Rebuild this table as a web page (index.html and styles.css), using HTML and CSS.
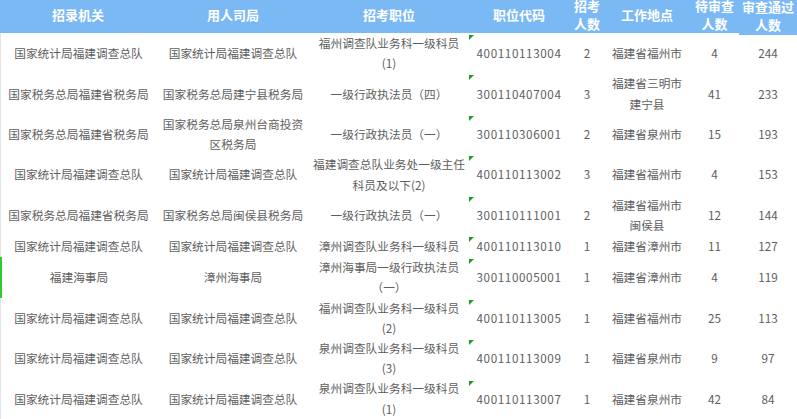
FILE: index.html
```html
<!DOCTYPE html>
<html lang="zh-CN">
<head>
<meta charset="utf-8">
<title>招录机关</title>
<link rel="stylesheet" href="styles.css">
</head>
<body>
<div class="sheet">
  <div class="th">招录机关</div>
  <div class="th">用人司局</div>
  <div class="th">招考职位</div>
  <div class="th">职位代码</div>
  <div class="th two">招考<br>人数</div>
  <div class="th">工作地点</div>
  <div class="th two">待审查<br>人数</div>
  <div class="th two last">审查通过<br>人数</div>

  <div class="td first">国家统计局福建调查总队</div><div class="td">国家统计局福建调查总队</div><div class="td">福州调查队业务科一级科员(1)</div><div class="td code">400110113004</div><div class="td">2</div><div class="td">福建省福州市</div><div class="td">4</div><div class="td">244</div>

  <div class="td first">国家税务总局福建省税务局</div><div class="td">国家税务总局建宁县税务局</div><div class="td">一级行政执法员（四）</div><div class="td code">300110407004</div><div class="td">3</div><div class="td">福建省三明市建宁县</div><div class="td">41</div><div class="td">233</div>

  <div class="td first">国家税务总局福建省税务局</div><div class="td">国家税务总局泉州台商投资区税务局</div><div class="td">一级行政执法员（一）</div><div class="td code">300110306001</div><div class="td">2</div><div class="td">福建省泉州市</div><div class="td">15</div><div class="td">193</div>

  <div class="td first">国家统计局福建调查总队</div><div class="td">国家统计局福建调查总队</div><div class="td">福建调查总队业务处一级主任科员及以下(2)</div><div class="td code">400110113002</div><div class="td">3</div><div class="td">福建省福州市</div><div class="td">4</div><div class="td">153</div>

  <div class="td first">国家税务总局福建省税务局</div><div class="td">国家税务总局闽侯县税务局</div><div class="td">一级行政执法员（一）</div><div class="td code">300110111001</div><div class="td">2</div><div class="td">福建省福州市闽侯县</div><div class="td">12</div><div class="td">144</div>

  <div class="td first">国家统计局福建调查总队</div><div class="td">国家统计局福建调查总队</div><div class="td">漳州调查队业务科一级科员</div><div class="td code">400110113010</div><div class="td">1</div><div class="td">福建省漳州市</div><div class="td">11</div><div class="td">127</div>

  <div class="td first mark">福建海事局</div><div class="td">漳州海事局</div><div class="td">漳州海事局一级行政执法员（一）</div><div class="td code">300110005001</div><div class="td">1</div><div class="td">福建省漳州市</div><div class="td">4</div><div class="td">119</div>

  <div class="td first">国家统计局福建调查总队</div><div class="td">国家统计局福建调查总队</div><div class="td">福州调查队业务科一级科员(2)</div><div class="td code">400110113005</div><div class="td">1</div><div class="td">福建省福州市</div><div class="td">25</div><div class="td">113</div>

  <div class="td first">国家统计局福建调查总队</div><div class="td">国家统计局福建调查总队</div><div class="td">泉州调查队业务科一级科员(3)</div><div class="td code">400110113009</div><div class="td">1</div><div class="td">福建省泉州市</div><div class="td">9</div><div class="td">97</div>

  <div class="td first">国家统计局福建调查总队</div><div class="td">国家统计局福建调查总队</div><div class="td">泉州调查队业务科一级科员(1)</div><div class="td code">400110113007</div><div class="td">1</div><div class="td">福建省泉州市</div><div class="td">42</div><div class="td">84</div>
</div>
</body>
</html>
```

FILE: styles.css
```css
html, body {
  margin: 0;
  padding: 0;
  background: #ffffff;
}

.sheet {
  display: grid;
  grid-template-columns: 156px 154px 158px 102px 34px 86px 49px 58px;
  grid-template-rows: 33px;
  grid-auto-rows: minmax(22px, auto);
  font-family: "Noto Sans CJK SC", "Noto Sans", sans-serif;
  font-size: 11.7px;
  color: #5e5e5e;
  width: 797px;
  overflow: hidden;
  height: 419px;
}

.th {
  background: #7bb9f5;
  color: #ffffff;
  font-weight: 700;
  font-size: 13px;
  line-height: 18px;
  display: flex;
  align-items: center;
  justify-content: center;
  text-align: center;
  padding-bottom: 3px;
  box-sizing: border-box;
  white-space: nowrap;
}

.th.two {
  padding-bottom: 3px;
}

.th.last {
  margin-bottom: -2px;
}

.td {
  display: flex;
  align-items: center;
  justify-content: center;
  text-align: center;
  line-height: 20.3px;
  padding: 0 5px;
  box-sizing: border-box;
  overflow-wrap: anywhere;
}

.td:nth-child(8n+3) {
  padding: 0 2px;
}

.td:nth-child(8n+6) {
  padding: 0 3px;
}

.td:nth-child(8n+5),
.td:nth-child(8n+7),
.td:nth-child(8n) {
  padding: 0;
}

.td.first {
  border-left: 1px solid #e4e4e4;
}

.td.mark {
  border-left: 2px solid #2ccc2c;
}

.td.code {
  position: relative;
  letter-spacing: 0.6px;
}

.td.code::before {
  content: "";
  position: absolute;
  left: 1px;
  top: 2px;
  border-top: 5px solid #1f9f1f;
  border-right: 5px solid transparent;
}
```
